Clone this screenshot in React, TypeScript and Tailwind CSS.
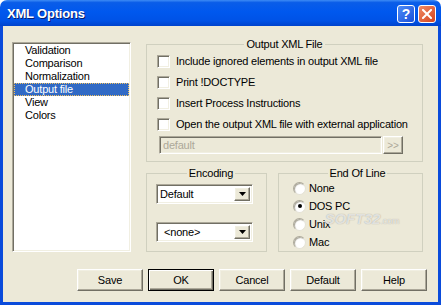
import React from 'react'

const sunken =
  'border border-t-[#ACA899] border-l-[#ACA899] border-b-white border-r-white shadow-[inset_1px_1px_0_#716F64,inset_-1px_-1px_0_#F1EFE2]'
const raised =
  'border border-t-white border-l-white border-b-[#716F64] border-r-[#716F64] shadow-[inset_-1px_-1px_0_#ACA899,inset_1px_1px_0_#F1EFE2]'

const pages = ['Validation', 'Comparison', 'Normalization', 'Output file', 'View', 'Colors']
const options = [
  'Include ignored elements in output XML file',
  'Print !DOCTYPE',
  'Insert Process Instructions',
  'Open the output XML file with external application',
]
const eol = ['None', 'DOS PC', 'Unix', 'Mac']
const buttons = ['Save', 'OK', 'Cancel', 'Default', 'Help']

function TitleBar() {
  return (
    <div className="h-[26px] shrink-0 rounded-t-[7px] flex items-center justify-between pl-[7px] pr-[5px] pt-[1px] bg-[linear-gradient(to_bottom,#3D8BF5_0%,#0A5DE8_10%,#0058EE_45%,#0052E6_80%,#0043CC_100%)]">
      <span className="text-white font-bold text-[13px] tracking-[-0.2px] [text-shadow:1px_1px_0_#0A1E6E]">XML Options</span>
      <div className="flex gap-[3px]">
        <div className="size-[18px] rounded-[3px] border border-white bg-[linear-gradient(to_bottom_right,#4D8CF8,#1A4FD8)] flex items-center justify-center text-white font-bold text-[14px] leading-none">
          ?
        </div>
        <div className="size-[18px] rounded-[3px] border border-white bg-[linear-gradient(to_bottom_right,#F08A64,#D44420)] flex items-center justify-center">
          <svg width="10" height="10" viewBox="0 0 10 10">
            <path d="M1 1 L9 9 M9 1 L1 9" stroke="white" strokeWidth="2" strokeLinecap="square" />
          </svg>
        </div>
      </div>
    </div>
  )
}

function Arrow() {
  return (
    <svg width="7" height="4" viewBox="0 0 7 4">
      <polygon points="0,0 7,0 3.5,4" fill="#000" />
    </svg>
  )
}

function Combo({ value, className }: { value: string; className?: string }) {
  return (
    <div className={`w-[97px] h-[20px] bg-white flex items-center p-[2px] ${sunken} ${className ?? ''}`}>
      <span className="flex-1 pl-[1px]">{value}</span>
      <div className={`w-[16px] h-full bg-[#ECE9D8] flex items-center justify-center ${raised}`}>
        <Arrow />
      </div>
    </div>
  )
}

export default function App() {
  return (
    <div className="w-[441px] h-[305px] flex flex-col font-['Liberation_Sans',sans-serif] text-[11px] text-black">
      <TitleBar />
      <div className="relative flex-1 flex flex-col bg-[#ECE9D8] border-x-[3px] border-b-[3px] border-[#0A4BDB] tracking-[-0.2px]">
        <div className="flex items-start pl-[9px]">
          <div className={`mt-[16px] w-[119px] h-[210px] bg-white p-[1px] ${sunken}`}>
            {pages.map(p =>
              p === 'Output file' ? (
                <div key={p} className="h-[13px] leading-[11px] pl-[10px] bg-[#316AC5] text-white border border-dotted border-[#F0C060]">
                  {p}
                </div>
              ) : (
                <div key={p} className="h-[13px] leading-[13px] pl-[11px]">
                  {p}
                </div>
              ),
            )}
          </div>

          <div className="ml-[15px] mt-[11px] w-[277px] flex flex-col gap-[4px]">
            <fieldset className="border border-[#D0D0BF] px-[10px] pb-[7px] min-w-0">
              <legend className="mx-auto px-[2px] leading-[14px]">Output XML File</legend>
              {options.map(o => (
                <label key={o} className="flex items-center h-[21px] gap-[6px] whitespace-nowrap">
                  <span className={`size-[13px] bg-white shrink-0 ${sunken}`} />
                  <span>{o}</span>
                </label>
              ))}
              <div className="flex h-[18px] mt-[1px] ml-[2px]">
                <div className={`w-[223px] h-full pl-[3px] flex items-center text-[#ACA899] bg-[#ECE9D8] ${sunken}`}>default</div>
                <div className={`ml-[1px] w-[20px] h-full flex items-center justify-center text-[#ACA899] text-[10px] ${raised}`}>
                  &gt;&gt;
                </div>
              </div>
            </fieldset>

            <div className="flex gap-[11px]">
              <fieldset className="w-[121px] h-[86px] border border-[#D0D0BF] pl-[9px] min-w-0">
                <legend className="mx-auto px-[2px] leading-[14px]">Encoding</legend>
                <Combo value="Default" className="mt-[4px]" />
                <Combo value="<none>" className="mt-[18px] pl-[6px]" />
              </fieldset>
              <fieldset className="w-[145px] h-[86px] border border-[#D0D0BF] pl-[14px] min-w-0">
                <legend className="mx-auto px-[2px] leading-[14px]">End Of Line</legend>
                <div className="-mt-px">
                  {eol.map(e => (
                    <label key={e} className="flex items-center h-[18px] gap-[2px]">
                      <span className="size-[13px] rounded-full bg-white border border-t-[#ACA899] border-l-[#ACA899] border-b-[#E4E2D6] border-r-[#E4E2D6] shadow-[inset_1px_1px_1px_#A8A598] flex items-center justify-center">
                        {e === 'DOS PC' && <span className="size-[4px] rounded-full bg-black" />}
                      </span>
                      <span className="ml-[1px]">{e}</span>
                    </label>
                  ))}
                </div>
              </fieldset>
            </div>
          </div>
        </div>

        <div className="flex gap-[5px] pl-[74px] mt-[17px]">
          {buttons.map(b => (
            <button
              key={b}
              className={`w-[66px] h-[22px] bg-[#ECE9D8] ${
                b === 'OK'
                  ? 'border border-black shadow-[inset_1px_1px_0_white,inset_-1px_-1px_0_#716F64,inset_-2px_-2px_0_#ACA899]'
                  : raised
              }`}
            >
              {b}
            </button>
          ))}
        </div>

        <span className="absolute left-[322px] top-[182px] italic font-bold text-[15px] text-white/70 [text-shadow:0_0_1px_#9A988C] pointer-events-none">
          SOFT32<span className="text-[9px] font-normal not-italic">.com</span>
        </span>
      </div>
    </div>
  )
}
